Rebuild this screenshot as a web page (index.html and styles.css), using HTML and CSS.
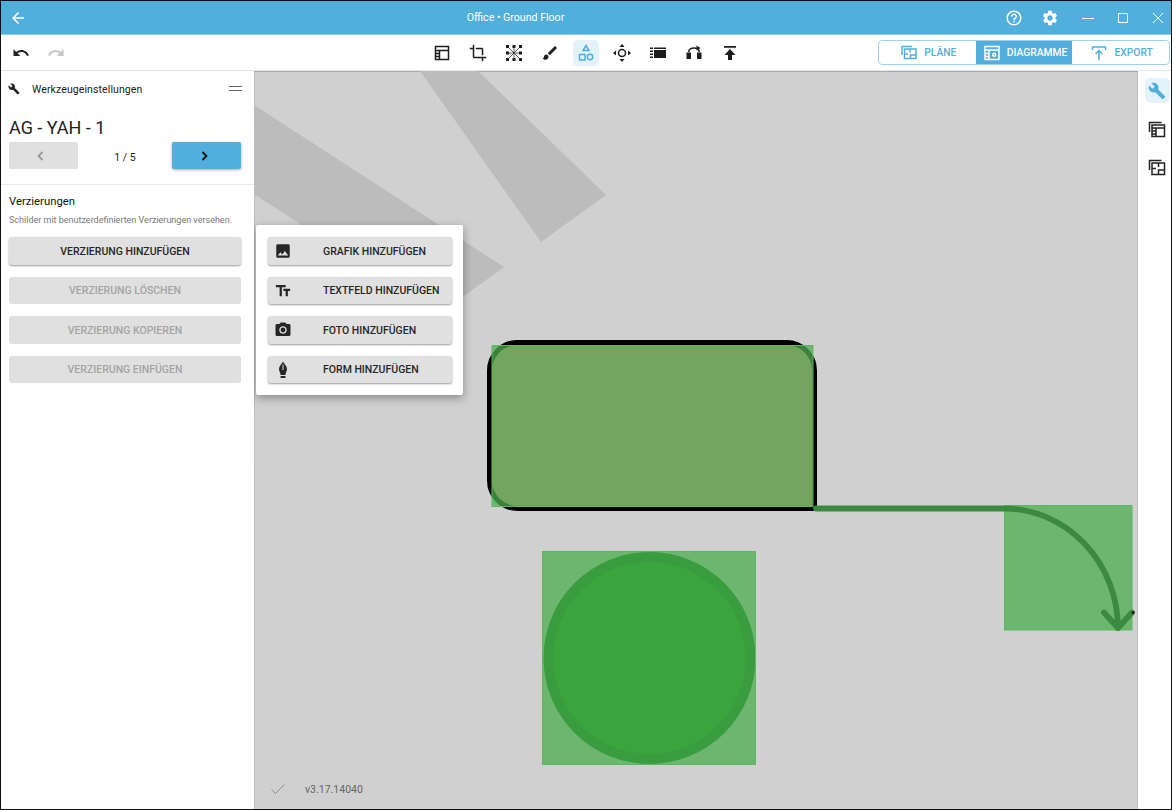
FILE: index.html
```html
<!DOCTYPE html>
<html lang="de">
<head>
<meta charset="UTF-8">
<title>Office • Ground Floor</title>
<link rel="stylesheet" href="styles.css">
</head>
<body>
<div class="window">
    <header class="titlebar">
        <div class="title-left">
            <svg class="ic18" viewBox="0 0 24 24"><path d="M20 11H7.83l5.59-5.59L12 4l-8 8 8 8 1.41-1.41L7.83 13H20v-2z"/></svg>
        </div>
        <div class="title-text">Office • Ground Floor</div>
        <div class="title-right">
            <svg class="ic18" viewBox="0 0 24 24"><path d="M11 18h2v-2h-2v2zm1-16C6.48 2 2 6.48 2 12s4.48 10 10 10 10-4.48 10-10S17.52 2 12 2zm0 18c-4.41 0-8-3.59-8-8s3.59-8 8-8 8 3.59 8 8-3.59 8-8 8zm0-14c-2.21 0-4 1.79-4 4h2c0-1.1.9-2 2-2s2 .9 2 2c0 2-3 1.75-3 5h2c0-2.25 3-2.5 3-5 0-2.21-1.79-4-4-4z"/></svg>
            <svg class="ic18" viewBox="0 0 24 24"><path d="M19.14 12.94c.04-.3.06-.61.06-.94 0-.32-.02-.64-.07-.94l2.03-1.58c.18-.14.23-.41.12-.61l-1.92-3.32c-.12-.22-.37-.29-.59-.22l-2.39.96c-.5-.38-1.03-.7-1.62-.94l-.36-2.54c-.04-.24-.24-.41-.48-.41h-3.84c-.24 0-.43.17-.47.41l-.36 2.54c-.59.24-1.13.57-1.62.94l-2.39-.96c-.22-.08-.47 0-.59.22L2.74 8.87c-.12.21-.08.47.12.61l2.03 1.58c-.05.3-.09.63-.09.94s.02.64.07.94l-2.03 1.58c-.18.14-.23.41-.12.61l1.92 3.32c.12.22.37.29.59.22l2.39-.96c.5.38 1.03.7 1.62.94l.36 2.54c.05.24.24.41.48.41h3.84c.24 0 .44-.17.47-.41l.36-2.54c.59-.24 1.13-.56 1.62-.94l2.39.96c.22.08.47 0 .59-.22l1.92-3.32c.12-.22.07-.47-.12-.61l-2.01-1.58zM12 15.6c-1.98 0-3.6-1.62-3.6-3.6s1.62-3.6 3.6-3.6 3.6 1.62 3.6 3.6-1.62 3.6-3.6 3.6z"/></svg>
            <div class="win-controls">
                <svg class="ic12" viewBox="0 0 12 12"><path d="M0 6.5h12" class="thin"/></svg>
                <svg class="ic12" viewBox="0 0 12 12"><rect x="1.5" y="1.5" width="9" height="9" class="thin"/></svg>
                <svg class="ic12" viewBox="0 0 12 12"><path d="M1 1l10 10M11 1L1 11" class="thin"/></svg>
            </div>
        </div>
    </header>

    <div class="toolbar">
        <div class="history">
            <svg class="ic18" viewBox="0 0 24 24"><path d="M12.5 8c-2.65 0-5.05.99-6.9 2.6L2 7v9h9l-3.62-3.62c1.39-1.16 3.16-1.88 5.12-1.88 3.54 0 6.55 2.31 7.6 5.5l2.37-.78C21.08 11.03 17.15 8 12.5 8z"/></svg>
            <svg class="ic18 muted" viewBox="0 0 24 24"><path d="M18.4 10.6C16.55 8.99 14.15 8 11.5 8c-4.65 0-8.58 3.03-9.96 7.22L3.9 16c1.05-3.19 4.05-5.5 7.6-5.5 1.95 0 3.73.72 5.12 1.88L13 16h9V7l-3.6 3.6z"/></svg>
        </div>
        <div class="tools">
            <span class="tool"><svg class="ic18" viewBox="0 0 18 18"><path class="line" d="M2.5 2.5h13v13h-13zM2.5 6.5h13M6.5 6.5v9M2.5 9.5h4M2.5 12.5h4"/></svg></span>
            <span class="tool"><svg class="ic18" viewBox="0 0 24 24"><path d="M17 15h2V7c0-1.1-.9-2-2-2H9v2h8v8zM7 17V1H5v4H1v2h4v10c0 1.1.9 2 2 2h10v4h2v-4h4v-2H7z"/></svg></span>
            <span class="tool"><svg class="ic18" viewBox="0 0 18 18"><path d="M1 1h3v3H1zM7.5 1h3v3h-3zM14 1h3v3h-3zM1 7.5h3v3H1zM14 7.5h3v3h-3zM1 14h3v3H1zM7.5 14h3v3h-3zM14 14h3v3h-3z"/><path class="hair" d="M4 4l10 10M14 4L4 14M9 4v10M4 9h10"/></svg></span>
            <span class="tool"><svg class="ic18" viewBox="0 0 24 24"><path d="M7 14c-1.66 0-3 1.34-3 3 0 1.31-1.16 2-2 2 .92 1.22 2.49 2 4 2 2.21 0 4-1.79 4-4 0-1.66-1.34-3-3-3zm13.71-9.37l-1.34-1.34c-.39-.39-1.02-.39-1.41 0L9 12.25 11.75 15l8.96-8.96c.39-.39.39-1.02 0-1.41z"/></svg></span>
            <span class="tool active"><svg class="ic18" viewBox="0 0 18 18"><path class="line" d="M9 1.5l3 5H6zM2.5 10.5H8V16H2.500z"/><circle class="line" cx="13" cy="13" r="2.7"/></svg></span>
            <span class="tool"><svg class="ic18" viewBox="0 0 18 18"><circle class="line" cx="9" cy="9" r="3.5"/><path d="M9 0l2.5 3h-5zM9 18l-2.500-3h5zM0 9l3-2.500v5zM18 9l-3 2.500v-5z"/></svg></span>
            <span class="tool"><svg class="ic18" viewBox="0 0 18 18"><path d="M5 3.500h12V14H5zM1 3.500h3V5H1zM1 6.500h3V8H1zM1 9.500h3V11H1zM1 12.500h3V14H1z"/><path fill="#fff" d="M5 5h12v1H5z"/></svg></span>
            <span class="tool"><svg class="ic18" viewBox="0 0 18 18"><path d="M1.500 8.500H6V15H1.500zM12 8.500h4.500V15H12z"/><path class="line" d="M3.700 8c0-5.500 10.600-5.500 10.600 0"/><path d="M11.500 1.500l4 2.500-4 2.500z"/></svg></span>
            <span class="tool"><svg class="ic18" viewBox="0 0 18 18"><path d="M3 2h12v1.800H3zM9 5l5.500 6H11v5H7v-5H3.500z"/></svg></span>
        </div>
        <div class="tabs-wrap">
            <div class="tabs">
                <div class="tab">
                    <svg class="ic16" viewBox="0 0 16 16"><path class="line" d="M1 10V1.500h10M3.500 4H15v9.500H3.500zM9 4v3.500M3.500 9H7M9.500 13.500V10H15"/></svg>
                    PLÄNE
                </div>
                <div class="tab on">
                    <svg class="ic16" viewBox="0 0 16 16"><path class="line" d="M1 1.500h14v13H1zM1 5h14M5 5v9.500M1 8.500h4M1 11.500h4"/><circle class="line" cx="10.200" cy="9.800" r="1.500"/></svg>
                    DIAGRAMME
                </div>
                <div class="tab">
                    <svg class="ic16" viewBox="0 0 16 16"><path class="line" d="M1.500 5V2h13v3M8 15V6M4.500 9L8 5.500 11.500 9"/></svg>
                    EXPORT
                </div>
            </div>
        </div>
    </div>

    <div class="main">
        <aside class="panel">
            <div class="panel-head">
                <svg class="ic12" viewBox="0 0 24 24"><path d="M22.700 19l-9.100-9.100c.9-2.300.4-5-1.500-6.900-2-2-5-2.400-7.400-1.300L9 6 6 9 1.600 4.700C.4 7.100.9 10.100 2.900 12.100c1.900 1.900 4.600 2.400 6.900 1.500l9.100 9.100c.4.4 1 .4 1.400 0l2.300-2.300c.5-.4.5-1.100.1-1.400z"/></svg>
                <span class="panel-title">Werkzeugeinstellungen</span>
                <span class="grip"></span>
            </div>
            <div class="sign-name">AG - YAH - 1</div>
            <div class="pager">
                <button class="pager-btn"><svg class="ic12" viewBox="0 0 12 12"><path class="chev" d="M7.500 2L3.500 6l4 4"/></svg></button>
                <span class="pager-count">1 / 5</span>
                <button class="pager-btn next"><svg class="ic12" viewBox="0 0 12 12"><path class="chev" d="M4.500 2l4 4-4 4"/></svg></button>
            </div>
            <div class="section">
                <div class="section-title">Verzierungen</div>
                <div class="section-desc">Schilder mit benutzerdefinierten Verzierungen versehen.</div>
                <div class="btn-stack">
                    <button class="btn raised">VERZIERUNG HINZUFÜGEN</button>
                    <button class="btn off">VERZIERUNG LÖSCHEN</button>
                    <button class="btn off">VERZIERUNG KOPIEREN</button>
                    <button class="btn off">VERZIERUNG EINFÜGEN</button>
                </div>
            </div>
        </aside>

        <section class="canvas">
            <svg class="drawing" viewBox="254 71 884 738">
                <path class="band" d="M420 71H478L606 195 541 242z"/>
                <path class="band" d="M254 105L504 267 439 314 254 194z"/>

                <path d="M516 342.500H786A28 28 0 0 1 814.500 370.500V508.500H517.500A28 28 0 0 1 489.500 480.500V370.500A28 28 0 0 1 516 342.500z" fill="#ec8c8c" stroke="#000" stroke-width="5"/>
                <rect class="overlay" x="492" y="345.500" width="321" height="161"/>

                <circle cx="649.500" cy="658" r="101" fill="#008c00" stroke="#006a08" stroke-width="10"/>
                <rect class="overlay" x="542.500" y="551.500" width="213" height="213"/>

                <rect class="overlay" x="1004.500" y="505.500" width="127.500" height="124.500"/>
                <path class="connector" d="M816 508.500H1004A114 120 0 0 1 1118 628M1104 612.500L1118 628 1132 612.500"/>
                <circle cx="1133" cy="612.500" r="1.500" fill="#111"/>
            </svg>
            <span class="edge-handle"></span>

            <div class="popover">
                <button class="btn raised pop-btn">
                    <svg class="ic18" viewBox="0 0 24 24"><path d="M21 19V5c0-1.100-.9-2-2-2H5c-1.100 0-2 .9-2 2v14c0 1.100.9 2 2 2h14c1.100 0 2-.9 2-2zM8.500 13.500l2.500 3.010L14.500 12l4.500 6H5l3.500-4.500z"/></svg>
                    <span>GRAFIK HINZUFÜGEN</span>
                </button>
                <button class="btn raised pop-btn">
                    <svg class="ic18" viewBox="0 0 24 24"><path d="M2.500 4v3h5v12h3V7h5V4h-13zm19 5h-9v3h3v7h3v-7h3V9z"/></svg>
                    <span>TEXTFELD HINZUFÜGEN</span>
                </button>
                <button class="btn raised pop-btn">
                    <svg class="ic18" viewBox="0 0 24 24"><path d="M9 2L7.170 4H4c-1.100 0-2 .9-2 2v12c0 1.100.9 2 2 2h16c1.100 0 2-.9 2-2V6c0-1.100-.9-2-2-2h-3.170L15 2H9zm3 15c-2.760 0-5-2.240-5-5s2.240-5 5-5 5 2.240 5 5-2.240 5-5 5z"/><circle cx="12" cy="12" r="3.200"/></svg>
                    <span>FOTO HINZUFÜGEN</span>
                </button>
                <button class="btn raised pop-btn">
                    <svg class="ic18" viewBox="0 0 18 18"><path d="M9 .8C10.500 3 13 5.500 13 8c0 2-1.300 3.500-1.600 6H6.600C6.300 11.500 5 10 5 8 5 5.500 7.500 3 9 .8zM6.600 15h4.800v2H6.600z"/><path class="cut" d="M9 3.500V9"/></svg>
                    <span>FORM HINZUFÜGEN</span>
                </button>
            </div>

            <div class="status">
                <svg class="ic16" viewBox="0 0 16 16"><path class="tick" d="M1.500 8.500l4 4 9-9"/></svg>
                <span>v3.17.14040</span>
            </div>
        </section>

        <nav class="rail">
            <span class="rail-item active"><svg class="ic18" viewBox="0 0 24 24"><path d="M22.700 19l-9.100-9.100c.9-2.300.4-5-1.500-6.900-2-2-5-2.400-7.400-1.300L9 6 6 9 1.600 4.700C.4 7.100.9 10.100 2.900 12.100c1.900 1.900 4.600 2.400 6.900 1.500l9.100 9.100c.4.4 1 .4 1.400 0l2.300-2.300c.5-.4.5-1.100.1-1.400z"/></svg></span>
            <span class="rail-item"><svg class="ic18" viewBox="0 0 18 18"><path class="line" d="M1.500 12V2.500h12M4 5h12.500v11.500H4zM4 8h12.500M8 8v8.500M4 11h4M4 14h4"/></svg></span>
            <span class="rail-item"><svg class="ic18" viewBox="0 0 18 18"><path class="line" d="M1.500 12V2.500h12M4 5h12.500v11.500H4zM10.500 5v4M4 10.500h4M10.500 16.500V12h6"/></svg></span>
        </nav>
    </div>
</div>
</body>
</html>
```

FILE: styles.css
```css
* {
    box-sizing: border-box;
}

html, body {
    margin: 0;
    padding: 0;
}

body {
    font-family: Roboto, "Liberation Sans", sans-serif;
    color: #222;
    background: #fff;
}

svg {
    display: block;
    fill: currentColor;
    flex: none;
}

.ic12 { width: 12px; height: 12px; }
.ic16 { width: 16px; height: 16px; }
.ic18 { width: 18px; height: 18px; }

.line, .thin, .chev, .hair, .cut, .tick {
    fill: none;
    stroke: currentColor;
}

.line { stroke-width: 1.5; }
.thin { stroke-width: 1; }
.hair { stroke-width: 0.7; }
.chev { stroke-width: 1.8; }
.cut { stroke: #e0e0e0; stroke-width: 1; }
.tick { stroke-width: 1; }

.window {
    width: 1172px;
    height: 810px;
    border: 1px solid #111;
    display: flex;
    flex-direction: column;
    overflow: hidden;
}

/* title bar */
.titlebar {
    height: 34px;
    background: #52aedb;
    border-bottom: 1px solid #8ccbe8;
    color: #fff;
    display: flex;
    align-items: center;
    flex: none;
}

.title-left {
    width: 33px;
    padding-left: 8px;
}

.title-text {
    flex: 1;
    text-align: center;
    font-size: 10.6px;
    padding-left: 1px;
}

.title-right {
    width: 175px;
    display: flex;
    align-items: center;
    gap: 18px;
    padding-left: 9px;
}

.win-controls {
    display: flex;
    gap: 23px;
    margin-left: 5px;
}

/* toolbar */
.toolbar {
    height: 36px;
    flex: none;
    display: grid;
    grid-template-columns: 1fr auto 1fr;
    align-items: center;
    border-bottom: 1px solid #e6e6e6;
}

.history {
    display: flex;
    gap: 17px;
    padding-left: 11px;
}

.muted {
    color: #c4c4c4;
}

.tools {
    display: flex;
    gap: 10px;
}

.tool {
    width: 26px;
    height: 26px;
    border-radius: 5px;
    display: flex;
    align-items: center;
    justify-content: center;
    color: #1d1d1d;
}

.tool.active, .rail-item.active {
    background: #e3f2fb;
    color: #52aedb;
}

.tabs-wrap {
    display: flex;
    justify-content: flex-end;
    padding-right: 1px;
}

.tabs {
    width: 292px;
    height: 25px;
    display: flex;
    border: 1px solid #9dd2ec;
    border-radius: 4px;
    overflow: hidden;
}

.tab {
    flex: 1;
    display: flex;
    align-items: center;
    justify-content: center;
    gap: 7px;
    font-size: 10.3px;
    font-weight: 500;
    color: #52aedb;
    padding-left: 3px;
}

.tab.on {
    background: #52aedb;
    color: #fff;
}

/* body area */
.main {
    flex: 1;
    display: flex;
    min-height: 0;
}

.panel {
    width: 253px;
    flex: none;
    display: flex;
    flex-direction: column;
}

.panel-head {
    height: 36px;
    display: flex;
    align-items: center;
    padding: 0 12px 0 7px;
    flex: none;
}

.panel-title {
    font-size: 10.5px;
    margin-left: 12px;
    flex: 1;
    letter-spacing: 0.1px;
}

.grip {
    width: 13px;
    height: 5px;
    border-top: 1px solid #666;
    border-bottom: 1px solid #666;
    margin-top: -1px;
}

.sign-name {
    font-size: 18px;
    line-height: 22px;
    padding: 10px 8px 0;
    height: 35px;
    flex: none;
    color: #222;
}

.pager {
    display: flex;
    align-items: center;
    padding: 0 13px 0 8px;
    height: 27px;
    flex: none;
}

.pager-btn {
    width: 69px;
    height: 27px;
    border: 0;
    padding: 0 6px 0 0;
    border-radius: 2px;
    background: #e0e0e0;
    color: #999;
    display: flex;
    align-items: center;
    justify-content: center;
}

.pager-btn.next {
    background: #52aedb;
    color: #111;
    box-shadow: 0 1px 3px rgba(0, 0, 0, 0.35);
}

.pager-count {
    flex: 1;
    text-align: center;
    font-size: 10.5px;
    padding-top: 3px;
}

.section {
    margin-top: 15px;
    border-top: 1px solid #eaeaea;
    padding: 10px 13px 0 8px;
}

.section-title {
    font-size: 11.3px;
    line-height: 14px;
    color: #111;
}

.section-desc {
    font-size: 9px;
    line-height: 12px;
    margin-top: 5px;
    color: #777;
    white-space: nowrap;
}

.btn-stack {
    display: flex;
    flex-direction: column;
    gap: 12px;
    margin-top: 11.4px;
}

.btn {
    height: 27.5px;
    border: 0;
    border-radius: 3px;
    background: #e0e0e0;
    font-family: inherit;
    font-size: 10.5px;
    font-weight: 500;
    color: #262626;
    padding: 0;
}

.btn.raised {
    box-shadow: 0 1px 2px rgba(0, 0, 0, 0.4);
}

.btn.off {
    color: #a4a4a4;
}

/* canvas */
.canvas {
    position: relative;
    flex: 1;
    background: #d0d0d0;
    overflow: hidden;
    box-shadow: inset 0 1px 0 #aaa, inset 1px 0 0 #bbb, inset -1px 0 0 #bbb;
}

.drawing {
    width: 884px;
    height: 738px;
}

.band {
    fill: #bcbcbc;
}

.overlay {
    fill: rgba(76, 173, 80, 0.75);
    stroke: #5cb860;
    stroke-width: 1;
}

.connector {
    fill: none;
    stroke: #3c8a42;
    stroke-width: 5.8;
    stroke-linecap: round;
    stroke-linejoin: round;
}

.edge-handle {
    position: absolute;
    left: -1px;
    top: 347px;
    width: 2px;
    height: 48px;
    background: #c2c2c2;
}

.popover {
    position: absolute;
    left: 2px;
    top: 154px;
    width: 207px;
    height: 170px;
    background: #fff;
    border-radius: 2px;
    box-shadow: 0 3px 10px rgba(0, 0, 0, 0.35);
    padding: 12.4px 11px 12px 12px;
    display: flex;
    flex-direction: column;
    gap: 12px;
}

.pop-btn {
    display: flex;
    align-items: center;
    padding-left: 6px;
    flex: none;
}

.pop-btn span {
    margin-left: 31px;
}

.status {
    position: absolute;
    left: 16px;
    bottom: 12px;
    display: flex;
    align-items: center;
    gap: 19px;
    font-size: 10.5px;
    color: #666;
}

.status svg {
    color: #8d8d8d;
}

/* right rail */
.rail {
    width: 33px;
    flex: none;
    display: flex;
    flex-direction: column;
    align-items: center;
    gap: 13px;
    padding-top: 7px;
    padding-left: 5px;
}

.rail-item {
    width: 25px;
    height: 25px;
    border-radius: 5px;
    display: flex;
    align-items: center;
    justify-content: center;
    color: #222;
}
```
